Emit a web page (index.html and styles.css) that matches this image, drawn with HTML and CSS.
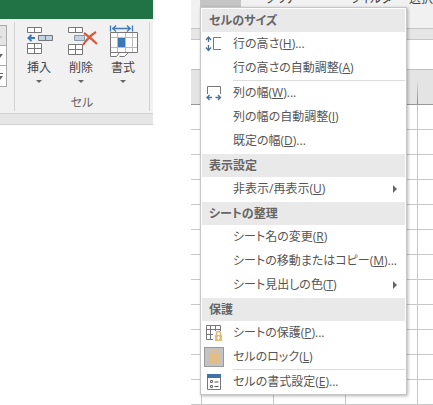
FILE: index.html
```html
<!DOCTYPE html>
<html lang="ja">
<head>
  <meta charset="UTF-8" />
  <meta name="viewport" content="width=device-width, initial-scale=1" />
  <title>セルの書式</title>
  <link rel="stylesheet" href="styles.css">
</head>
<body>
<main class="page">
  <section class="ribbon">
    <div class="titlebar"></div>
    <div class="ribbon-body">
      <div class="gallery">
        <button class="gallery-btn off" aria-label="上へ"><svg width="6" height="20"><path d="M0 11h2" stroke="#aaa" /></svg></button>
        <button class="gallery-btn" aria-label="下へ"><svg width="6" height="20"><path d="M-3 8h6l-3 4z" fill="#666" /></svg></button>
        <button class="gallery-btn" aria-label="その他"><svg width="6" height="20"><path d="M-3 7.500h6" stroke="#666" /><path d="M-3 10h6l-3 4z" fill="#666" /></svg></button>
      </div>
      <div class="group">
        <div class="tools">
          <button class="tool">
            <svg width="30" height="32" viewBox="0 0 30 32" fill="none">
              <path d="M3.500 2.500h14v5h-14zM10.500 2.500v5M3.500 18.500h14v10h-14zM10.500 18.500v10M3.500 23.500h14" fill="#fff" stroke="#777" />
              <path d="M14.500 10.500h14v5h-14zM21.500 10.500v5" fill="#c3d3e3" stroke="#777" />
              <path d="M11 13H5M7.500 10L4.500 13l3 3" stroke="#4078b4" stroke-width="2" />
            </svg>
            <span>挿入</span>
            <i class="arrow"></i>
          </button>
          <button class="tool">
            <svg width="30" height="32" viewBox="0 0 30 32" fill="none">
              <path d="M2.500 2.500h14v5h-14zM9.500 2.500v5M2.500 19.500h14v10h-14zM9.500 19.500v10M2.500 24.500h14" fill="#fff" stroke="#777" />
              <path d="M8.500 10.500h10v5h-10z" fill="#c3d3e3" stroke="#8a9aaa" />
              <path d="M18 8c4 3 8 6 13 11M30 7c-5 3-9 7-13 13" stroke="#d65a3c" stroke-width="2.200" />
            </svg>
            <span>削除</span>
            <i class="arrow"></i>
          </button>
          <button class="tool">
            <svg width="30" height="32" viewBox="0 0 30 32" fill="none">
              <path d="M2.500 0.500v6M24.500 0.500v6M4 3.500h19M8 0.500l-3 3 3 3M19 0.500l3 3-3 3" stroke="#4078b4" stroke-width="1.300" />
              <path d="M2.500 7.500h27v20h-9l-3 4h-5l2-4-4 4h-8z" fill="#fff" />
              <path d="M9.500 7.500v20M17.500 7.500v20M24.500 7.500v20M2.500 12.500h27M2.500 22.500h27" stroke="#bbb" />
              <path d="M2.500 7.500h27v20h-27zM2.500 27.500v4h6l3-4M11.500 31.500h5l4-4" stroke="#777" />
              <path d="M10 13h7v9h-7z" fill="#3a78b8" />
            </svg>
            <span>書式</span>
            <i class="arrow"></i>
          </button>
        </div>
        <div class="group-name">セル</div>
      </div>
    </div>
    <div class="ribbon-foot"></div>
  </section>

  <section class="sheet">
    <div class="sheet-ribbon">
      <span class="pressed"></span>
      <span class="cut clear">クリア</span>
      <span class="cut filter">フィルター</span>
      <span class="cut">選択</span>
    </div>
    <div class="strip"></div>
    <div class="formula"></div>
    <div class="columns"></div>
    <div class="cells"></div>

    <div class="menu" role="menu">
      <h2>セルのサイズ</h2>
      <button role="menuitem">
        <svg width="18" height="18" viewBox="0 0 18 18" fill="none">
          <path d="M3.500 2v5M1 5l2.500-3L6 5M3.500 10v5M1 12.500l2.500 3 2.500-3" stroke="#4a7298" stroke-width="1.300" />
          <path d="M16 2.500H8.500v12H16" stroke="#777" />
        </svg>
        <span>行の高さ(<u>H</u>)...</span>
      </button>
      <button role="menuitem"><span>行の高さの自動調整(<u>A</u>)</span></button>
      <hr>
      <button role="menuitem">
        <svg width="18" height="18" viewBox="0 0 18 18" fill="none">
          <path d="M2.500 10V2.500h13V10" stroke="#777" />
          <path d="M2 13.500h5M4.500 11L2 13.500 4.500 16M10.500 13.500h5M13 11l2.500 2.500L13 16" stroke="#4a7298" stroke-width="1.300" />
        </svg>
        <span>列の幅(<u>W</u>)...</span>
      </button>
      <button role="menuitem"><span>列の幅の自動調整(<u>I</u>)</span></button>
      <button role="menuitem"><span>既定の幅(<u>D</u>)...</span></button>
      <h2>表示設定</h2>
      <button role="menuitem" class="more"><span>非表示/再表示(<u>U</u>)</span></button>
      <h2>シートの整理</h2>
      <button role="menuitem"><span>シート名の変更(<u>R</u>)</span></button>
      <button role="menuitem"><span>シートの移動またはコピー(<u>M</u>)...</span></button>
      <button role="menuitem" class="more"><span>シート見出しの色(<u>T</u>)</span></button>
      <h2>保護</h2>
      <button role="menuitem">
        <svg width="18" height="18" viewBox="0 0 18 18" fill="none">
          <path d="M1.500 1.500h14v14h-14zM5.500 1.500v14M10.500 1.500v14M1.500 5.500h14M1.500 10.500h14" stroke="#777" />
          <path d="M8 7h10v11H8z" fill="#fff" />
          <path d="M11.500 11V9c0-2 4-2 4 0v2" stroke="#e2b878" stroke-width="1.500" />
          <path d="M10 11h7v6h-7z" fill="#e8b970" />
          <path d="M13.500 12v4M12 14h3" stroke="#fff" />
        </svg>
        <span>シートの保護(<u>P</u>)...</span>
      </button>
      <button role="menuitem" class="checked">
        <svg width="18" height="18" viewBox="0 0 18 18" fill="none">
          <path d="M6.500 8V5c0-3 5-3 5 0v3" stroke="#e2bd85" stroke-width="2" />
          <path d="M4 6h10v10H4z" fill="#e2bd85" />
        </svg>
        <span>セルのロック(<u>L</u>)</span>
      </button>
      <hr>
      <button role="menuitem">
        <svg width="18" height="18" viewBox="0 0 18 18" fill="none">
          <path d="M2.500 2.500h13v14h-13z" fill="#fff" stroke="#777" />
          <path d="M2 1h14v4H2z" fill="#3f73a8" />
          <path d="M5.500 7.500h2v2h-2zM5.500 12.500h2v2h-2z" stroke="#666" />
          <path d="M9.500 9h4M9.500 13.500h4" stroke="#555" />
        </svg>
        <span>セルの書式設定(<u>E</u>)...</span>
      </button>
    </div>
  </section>
</main>
</body>
</html>
```

FILE: styles.css
```css
* { box-sizing: border-box; }
body {
  margin: 0;
  font-family: "Open Sans", "Noto Sans CJK JP", sans-serif;
  font-size: 12px;
  font-feature-settings: "palt";
  line-height: 16px;
  color: #555;
  background: #fff;
}
button {
  font: inherit;
  color: inherit;
  font-feature-settings: inherit;
  border: none;
  background: none;
  padding: 0;
}
.page {
  display: flex;
  align-items: flex-start;
  gap: 38px;
  min-height: 100vh;
}

/* ribbon */
.ribbon {
  flex: 153;
  background: #f1f1f1;
}
.titlebar {
  height: 19px;
  background: #217346;
}
.ribbon-body {
  display: flex;
  border-bottom: 1px solid #d2d2d2;
}
.gallery {
  width: 7px;
  height: 62px;
  margin-top: 6px;
  border: 1px solid #ababab;
  border-left: none;
}
.gallery-btn {
  display: block;
  width: 100%;
  height: 20px;
  overflow: hidden;
  background: #fff;
  border-bottom: 1px solid #ababab;
}
.gallery-btn.off { background: #e4e4e4; }
.gallery-btn:last-child { border-bottom: none; }
.group {
  flex: 1;
  margin: 3px 3px 2px 7px;
  border: solid #d2d2d2;
  border-width: 0 1px;
  text-align: center;
}
.tools {
  display: flex;
  gap: 12px;
  padding: 3px 0 0 9px;
}
.tool {
  display: flex;
  flex-direction: column;
  align-items: center;
  color: #444;
}
.tool svg { overflow: visible; }
.tool span {
  margin-top: 3px;
}
.arrow {
  margin-top: 4px;
  border: solid transparent;
  border-width: 3px 3px 0;
  border-top-color: #666;
}
.group-name {
  margin-top: 12px;
  color: #666;
}
.ribbon-foot {
  height: 11px;
  background: #e6e6e6;
  border-bottom: 1px solid #d2d2d2;
}

/* sheet behind the menu */
.sheet {
  flex: 242;
  position: relative;
  display: flex;
  flex-direction: column;
  min-height: 100vh;
  overflow: hidden;
}
.sheet-ribbon {
  display: flex;
  height: 28px;
  padding-left: 9px;
  background: #f1f1f1;
  color: #444;
  white-space: nowrap;
}
.pressed {
  width: 42px;
  background: #c5c5c5;
}
.cut { margin-top: -9px; }
.clear {
  width: 111px;
  padding-left: 24px;
}
.filter { width: 59px; }
.strip {
  height: 12px;
  background: #e6e6e6;
  border: solid #c6c6c6;
  border-width: 1px 0;
}
.formula { height: 29px; }
.columns {
  height: 36px;
  background: linear-gradient(#e4e4e4, #888) right 15px bottom / 1px 24px no-repeat #e4e4e4;
  border-top: 1px solid #c0c0c0;
  border-bottom: 1px solid #999;
}
.cells {
  flex: 1;
  background:
    linear-gradient(to left, #c8c8c8 1px, transparent 1px) -61px 0 / 72px 25px,
    linear-gradient(to top, #c8c8c8 1px, transparent 1px) 0 0 / 72px 25px;
}

/* menu */
.menu {
  position: absolute;
  top: 7px;
  left: 9px;
  right: 26px;
  background: #fff;
  border: 1px solid #c6c6c6;
  box-shadow: 1px 1px 3px rgba(0, 0, 0, 0.3);
}
.menu h2 {
  height: 23px;
  margin: 1px 1px 0;
  padding-left: 7px;
  background: #e9e9e9;
  color: #666;
  font-size: 12px;
  line-height: 23px;
  font-weight: bold;
}
.menu button {
  display: flex;
  align-items: center;
  width: 100%;
  height: 24px;
  padding-left: 4px;
  white-space: nowrap;
}
.menu button > span {
  margin-left: auto;
  width: 173px;
  text-align: left;
}
.menu hr {
  height: 1px;
  margin: 0 1px 0 32px;
  border: none;
  background: #dcdcdc;
}
.menu .more::after {
  content: "";
  margin-right: 9px;
  border: solid transparent;
  border-width: 4px 0 4px 4px;
  border-left-color: #666;
}
.menu .more > span { width: 160px; }
.menu .checked svg {
  background: #c3c3c3;
  outline: 1px solid #999;
}
```
